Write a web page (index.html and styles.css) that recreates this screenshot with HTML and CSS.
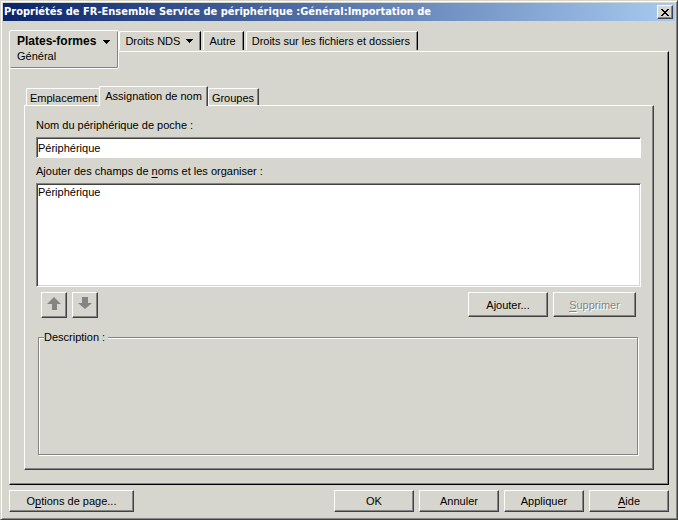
FILE: index.html
```html
<!DOCTYPE html>
<html lang="fr">

<head>
    <title>Propriétés</title>
    <meta charset="utf-8">
    <link rel="stylesheet" href="styles.css">
</head>

<body>
    <div class="window">
        <div class="titlebar">
            <h1 class="title">Propriétés de FR-Ensemble Service de périphérique :Général:Importation de</h1>
            <button class="btn-close" aria-label="Fermer">
                <svg width="8" height="7" viewBox="0 0 8 7" shape-rendering="crispEdges">
                    <path d="M0 0h2v1h1v1h2v-1h1v-1h2v1h-1v1h-1v1h-1v1h1v1h1v1h1v1h-2v-1h-1v-1h-2v1h-1v1h-2v-1h1v-1h1v-1h1v-1h-1v-1h-1v-1h-1z" />
                </svg>
            </button>
        </div>

        <div class="main">
            <div class="tabs">
                <button class="tab tab-active">
                    <span class="tab-name">Plates-formes
                        <svg class="caret" width="7" height="4" viewBox="0 0 7 4" shape-rendering="crispEdges"><path d="M0 0h7v1h-1v1h-1v1h-1v1h-1v-1h-1v-1h-1v-1h-1z" /></svg>
                    </span>
                    <span class="tab-page">Général</span>
                </button>
                <button class="tab">Droits NDS
                    <svg class="caret" width="7" height="4" viewBox="0 0 7 4" shape-rendering="crispEdges"><path d="M0 0h7v1h-1v1h-1v1h-1v1h-1v-1h-1v-1h-1v-1h-1z" /></svg>
                </button>
                <button class="tab">Autre</button>
                <button class="tab">Droits sur les fichiers et dossiers</button>
            </div>

            <div class="panel">
                <div class="subtabs">
                    <button class="subtab">Emplacement</button>
                    <button class="subtab subtab-active">Assignation de nom</button>
                    <button class="subtab">Groupes</button>
                </div>
                <div class="subpanel">
                    <label for="device_name">Nom du périphérique de poche :</label>
                    <input type="text" id="device_name" class="field" value="Périphérique">
                    <label for="name_fields">Ajouter des champs de <u>n</u>oms et les organiser :</label>
                    <select id="name_fields" class="list" size="6">
                        <option>Périphérique</option>
                    </select>
                    <div class="list-actions">
                        <button class="btn btn-arrow" aria-label="Monter" disabled>
                            <svg width="14" height="13" viewBox="0 0 14 13"><path d="M7 0l7 7h-4v6h-5v-6h-5z" /></svg>
                        </button>
                        <button class="btn btn-arrow" aria-label="Descendre" disabled>
                            <svg width="14" height="13" viewBox="0 0 14 13"><path d="M4 0h6v6h4l-7 6l-7-6h4z" /></svg>
                        </button>
                        <button class="btn btn-add">A<u>j</u>outer...</button>
                        <button class="btn btn-remove" disabled><u>S</u>upprimer</button>
                    </div>
                    <fieldset class="description">
                        <legend>Description :</legend>
                    </fieldset>
                </div>
            </div>
        </div>

        <div class="footer">
            <button class="btn btn-options">O<u>p</u>tions de page...</button>
            <button class="btn">OK</button>
            <button class="btn">Annuler</button>
            <button class="btn">Appliquer</button>
            <button class="btn"><u>A</u>ide</button>
        </div>
    </div>
</body>

</html>
```
FILE: styles.css
```css
* {
    box-sizing: border-box;
}
body {
    margin: 0;
    background-color: #d6d6ce;
}
body, button, input, select {
    font-family: "Liberation Sans", Arial, sans-serif;
    font-size: 11px;
    line-height: 14px;
    color: #000;
}
button {
    margin: 0;
    background-color: #d6d6ce;
    white-space: nowrap;
}
svg {
    display: block;
}
u {
    text-underline-offset: 2px;
}

/* window frame */
.window {
    display: flex;
    flex-direction: column;
    min-height: 100vh;
    padding: 1px;
    border: 1px solid;
    border-color: #d6d6ce #424242 #424242 #d6d6ce;
    box-shadow: inset 1px 1px #fff, inset -1px -1px #848484;
}
.titlebar {
    display: flex;
    align-items: center;
    justify-content: space-between;
    height: 18px;
    margin: 1px;
    padding: 0 2px 0 1px;
    background: linear-gradient(to right, #0a246a, #a6caf0);
}
.title {
    margin: 0;
    font-family: "DejaVu Sans Condensed", Tahoma, sans-serif;
    font-size: 11px;
    font-weight: bold;
    color: #fff;
    white-space: nowrap;
}
.btn-close {
    display: flex;
    align-items: center;
    justify-content: center;
    width: 16px;
    height: 14px;
    padding: 0;
    border: 1px solid;
    border-color: #fff #424242 #424242 #fff;
    box-shadow: inset -1px -1px #848484;
}

/* top level tabs */
.main {
    display: flex;
    flex-direction: column;
    flex: 1;
    padding: 8px 7px 0 7px;
}
.tabs {
    display: flex;
    align-items: flex-end;
    height: 21px;
}
.tab {
    display: flex;
    align-items: center;
    height: 19px;
    margin: 0 2px 1px 0;
    padding: 0 7px 0 5px;
    border: 1px solid;
    border-color: #fff #000 transparent #fff;
    border-bottom: 0;
    border-radius: 2px 0 0 0;
    box-shadow: inset -1px 0 #848484;
}
.tab .caret {
    margin-left: 6px;
}
.tab-active {
    position: relative;
    flex-direction: column;
    align-items: flex-start;
    align-self: flex-start;
    height: 39px;
    margin: 0 0 -18px 0;
    padding: 3px 8px 0 7px;
    border: 1px solid #fff;
    border-radius: 2px;
    box-shadow: inset -1px -1px #848484;
}
.tab-name {
    display: flex;
    align-items: center;
    font-size: 12px;
    line-height: 15px;
    font-weight: bold;
}
.tab-name .caret {
    margin-left: 7px;
}
.tab-page {
    display: block;
}
.panel {
    display: flex;
    flex-direction: column;
    flex: 1;
    padding: 34px 14px 14px 14px;
    border: 1px solid;
    border-color: #fff #000 #000 #fff;
    box-shadow: inset -1px -1px #848484;
}

/* second level tabs */
.subtabs {
    display: flex;
    align-items: flex-end;
    padding-left: 2px;
}
.subtab {
    height: 17px;
    padding: 1px 4px 0 3px;
    border: 1px solid;
    border-color: #fff #424242 transparent #fff;
    border-bottom: 0;
    border-radius: 2px 0 0 0;
    box-shadow: inset -1px 0 #848484;
}
.subtab:first-child {
    padding-right: 2px;
    border-right: 0;
    box-shadow: none;
}
.subtab-active {
    position: relative;
    height: 20px;
    margin-bottom: -1px;
    padding: 0 5px 2px 5px;
}
.subpanel {
    display: flex;
    flex-direction: column;
    flex: 1;
    padding: 12px 12px 14px 11px;
    border: 1px solid;
    border-color: #fff #424242 #424242 #fff;
    box-shadow: inset -1px -1px #848484;
}

/* fields */
.field {
    height: 21px;
    margin: 5px 0 6px 0;
    padding: 0 1px;
    border: 1px solid;
    border-color: #848484 #fff #fff #848484;
    background-color: #fff;
    box-shadow: inset 1px 1px #424242;
    outline: 0;
}
.list {
    height: 104px;
    margin: 5px 0;
    padding: 1px;
    border: 1px solid;
    border-color: #848484 #fff #fff #848484;
    border-radius: 0;
    background-color: #fff;
    box-shadow: inset 1px 1px #424242, inset -1px -1px #d6d6ce;
    outline: 0;
    overflow: hidden;
}
.list option {
    min-height: 14px;
    padding: 1px 0;
}
.list-actions {
    display: flex;
    gap: 5px;
    align-items: flex-start;
    padding: 0 5px;
}

/* buttons */
.btn {
    width: 80px;
    height: 22px;
    padding: 0;
    border: 1px solid;
    border-color: #fff #424242 #424242 #fff;
    box-shadow: inset -1px -1px #848484;
}
.btn:disabled {
    color: #848484;
    text-shadow: 1px 1px #fff;
}
.btn-arrow {
    display: flex;
    justify-content: center;
    width: 26px;
    height: 26px;
    padding-top: 4px;
    fill: #848484;
}
.btn-add {
    height: 25px;
    margin-left: auto;
}
.btn-remove {
    width: 83px;
    height: 25px;
}
.btn-options {
    width: 125px;
    margin-right: auto;
}
.description {
    flex: 1;
    margin: 12px 3px 0 2px;
    padding: 0 5px;
    border: 1px solid #848484;
    box-shadow: 1px 1px #fff, inset 1px 1px #fff;
}
.description legend {
    padding: 0 3px 0 0;
    background-color: #d6d6ce;
}
.footer {
    display: flex;
    gap: 5px;
    padding: 5px 7px 6px 7px;
}
```
